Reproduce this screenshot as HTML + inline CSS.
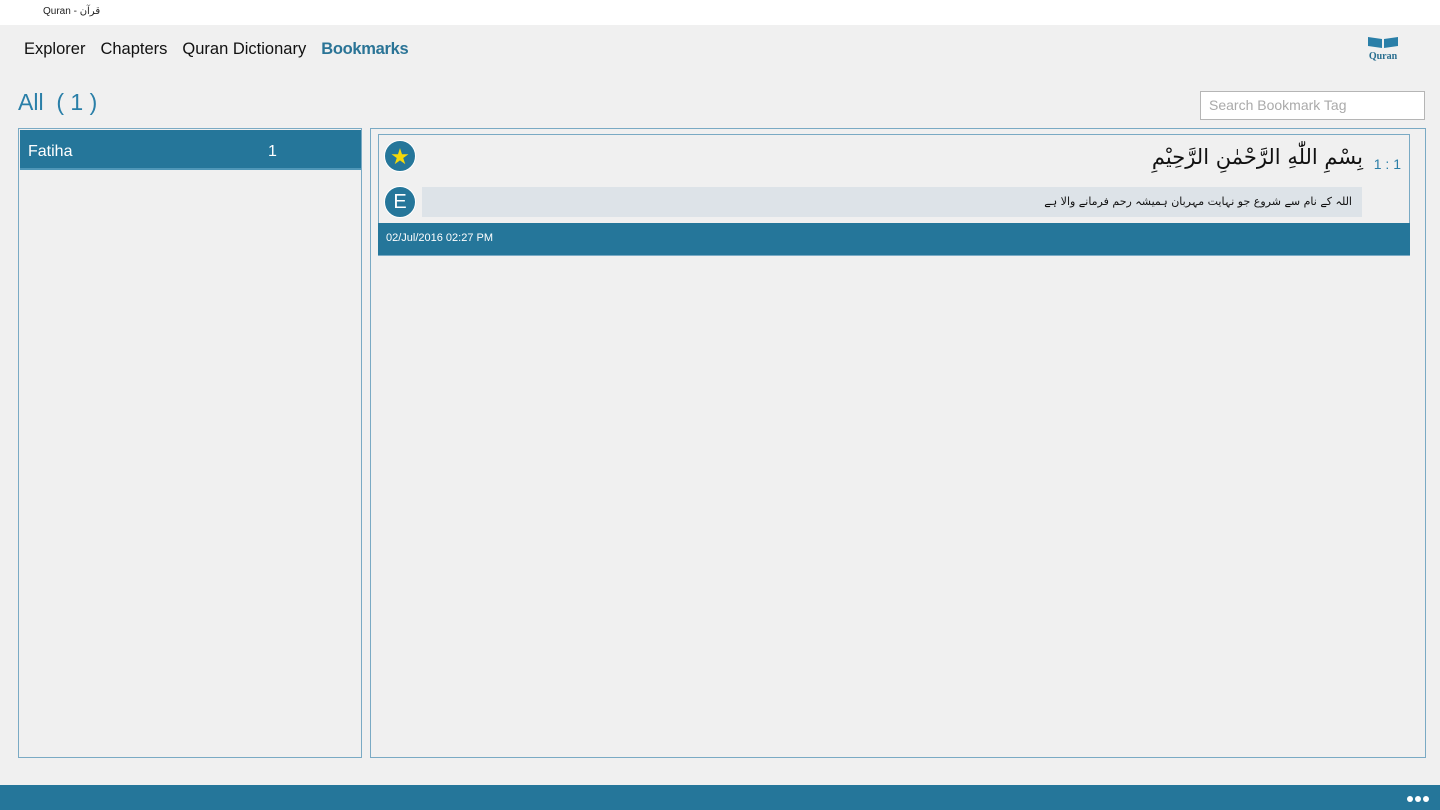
<!DOCTYPE html>
<html><head><meta charset="utf-8"><style>
*{margin:0;padding:0;box-sizing:border-box}
html,body{width:1440px;height:810px;overflow:hidden}
body{background:#f0f0f0;font-family:"Segoe UI","Liberation Sans","DejaVu Sans",sans-serif;position:relative}
.title{position:absolute;left:0;top:0;width:1440px;height:25px;background:#fff;font-size:10px;color:#222;padding:6px 0 0 43px}
.nav{position:absolute;top:40px;left:24px;font-size:16.5px;color:#111;white-space:nowrap}
.nav span{margin-right:15px}
.nav .act{color:#2a7496;font-weight:bold;letter-spacing:-0.3px}
.all{position:absolute;left:18px;top:89px;font-size:23px;color:#2a7fa8}
.search{position:absolute;left:1200px;top:91px;width:225px;height:29px;border:1px solid #b5b5b5;background:#fff;font-size:14px;color:#aaa;padding:5px 8px}
.left{position:absolute;left:18px;top:128px;width:344px;height:630px;border:1px solid #7aaac4}
.sel{position:absolute;left:1px;top:1px;width:341px;height:40px;background:#25769a;border-bottom:2px solid #4f97b8;color:#fff;font-size:16px;padding:13px 8px 0}
.sel b{position:absolute;left:248px;font-weight:normal}
.right{position:absolute;left:370px;top:128px;width:1056px;height:630px;border:1px solid #7aaac4}
.card{position:absolute;left:7px;top:5px;width:1032px;height:122px;border:1px solid #7aaac4}
.circ{position:absolute;width:32px;height:32px;border-radius:50%;background:#25769a;border:1px solid #fff;color:#fff;font-size:20px;text-align:center;line-height:31px}
.trans{position:absolute;left:43px;top:52px;width:940px;height:30px;background:#dde3e8;direction:rtl;font-size:11px;padding:8px 10px;color:#111;font-family:"DejaVu Sans",sans-serif}
.ar{position:absolute;right:46px;top:10px;font-size:21px;direction:rtl;font-family:"DejaVu Sans",sans-serif;color:#111}
.num{position:absolute;right:8px;top:21px;font-size:14px;color:#2a7fa8}
.date{position:absolute;left:-1px;top:88px;width:1032px;height:32px;background:#25769a;color:#fff;font-size:11px;padding:9px 8px}
.bottom{position:absolute;left:0;top:785px;width:1440px;height:25px;background:#25769a}
.dots{position:absolute;right:11px;top:0;height:25px;display:flex;align-items:center;gap:2px;padding-top:3px}
.dots i{display:block;width:6px;height:6px;border-radius:50%;background:#fff}
</style></head><body>
<div class="title">Quran - قرآن</div>
<div class="nav"><span>Explorer</span><span>Chapters</span><span>Quran Dictionary</span><span class="act">Bookmarks</span></div>
<svg style="position:absolute;left:1366px;top:34px" width="34" height="28" viewBox="0 0 34 28"><path d="M2 3 L16 5 L16 14 L2 12Z M18 5 L32 3 L32 12 L18 14Z" fill="#2a7fa8"/><text x="17" y="25" font-size="10" font-family="Liberation Serif,serif" font-weight="bold" fill="#2a6f90" text-anchor="middle">Quran</text></svg>
<div class="all">All &nbsp;( 1 )</div>
<div class="search">Search Bookmark Tag</div>
<div class="left"><div class="sel">Fatiha<b>1</b></div></div>
<div class="right">
 <div class="card">
  <div class="circ" style="left:5px;top:5px;color:#f5d90a;font-size:22px">★</div>
  <div class="circ" style="left:5px;top:51px">E</div>
  <div class="ar">بِسْمِ اللّٰهِ الرَّحْمٰنِ الرَّحِيْمِ</div>
  <div class="num">1 : 1</div>
  <div class="trans">اللہ کے نام سے شروع جو نہایت مہربان ہمیشہ رحم فرمانے والا ہے</div>
  <div class="date">02/Jul/2016 02:27 PM</div>
 </div>
</div>
<div class="bottom"><div class="dots"><i></i><i></i><i></i></div></div>
</body></html>
